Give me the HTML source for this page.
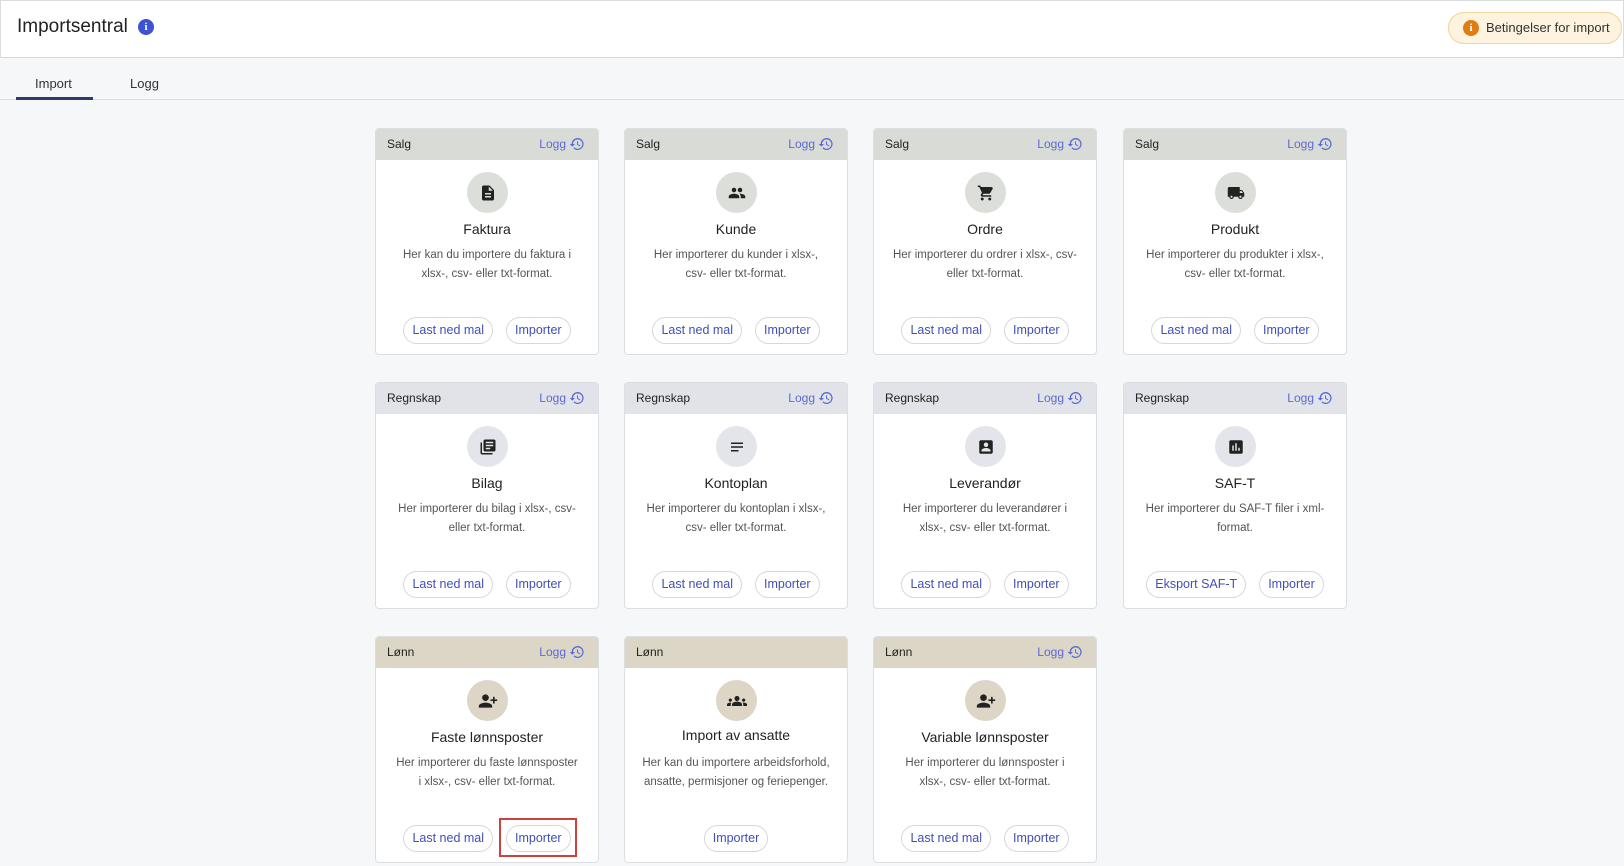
<!DOCTYPE html>
<html><head><meta charset="utf-8"><style>
*{box-sizing:border-box;margin:0;padding:0}
body{width:1624px;height:866px;background:#f5f7f9;font-family:"Liberation Sans",sans-serif;position:relative;overflow:hidden;color:#222}
.top{position:absolute;left:0;top:0;width:1624px;height:58px;background:#fff;border:1px solid #d9dcdf;border-bottom:1px solid #d6d9dc}
.title{position:absolute;left:16px;top:15px;font-size:19px;color:#222}
.info{position:absolute;left:137px;top:18px;width:16px;height:16px;border-radius:50%;background:#3d52d5;color:#fff;font-size:11px;font-weight:bold;text-align:center;line-height:16px;font-family:"Liberation Serif",serif}
.pill{position:absolute;left:1447px;top:11px;width:174px;height:32px;border-radius:16px;background:#fdf3df;border:1px solid #ecd49a;font-size:13px;color:#333;line-height:30px;padding-left:37px}
.pill i{position:absolute;left:14px;top:7px;width:16px;height:16px;border-radius:50%;background:#e07d12;color:#fff;font-style:normal;font-size:11px;font-weight:bold;text-align:center;line-height:16px;font-family:"Liberation Serif",serif}
.tabs{position:absolute;left:0;top:99px;width:1624px;border-top:1px solid #dadde0}
.tab{position:absolute;top:76px;font-size:13px;color:#333}
.ul{position:absolute;left:16px;top:97px;width:77px;height:3px;background:#2b3b6b}
.card{position:absolute;width:224px;height:227px;background:#fff;border:1px solid #dcdfe2;border-radius:4px;overflow:hidden}
.hd{height:31px;padding:0 11px;font-size:12px;line-height:31px;color:#222;position:relative}
.salg{background:#d9dcd6}.reg{background:#e2e3e8}.lonn{background:#dcd6c7}
.logg{position:absolute;right:13px;top:0;color:#5a6ad8;font-size:12px}
.logg svg{vertical-align:-4px;margin-left:3px}
.ic{position:absolute;left:91px;top:43px;width:41px;height:41px;border-radius:50%;display:flex;align-items:center;justify-content:center}
.cs{background:#dcdeda}.cr{background:#e4e5ea}.cl{background:#ddd6c7}
.nm{position:absolute;left:0;right:0;top:92px;text-align:center;font-size:14px;color:#222}
.ds{position:absolute;left:18px;right:18px;top:117px;text-align:center;font-size:11.5px;line-height:19px;color:#555}
.bt{position:absolute;top:188px;left:0;right:0;display:flex;justify-content:center;gap:13px}
.b{height:27px;border:1px solid #d4d7db;border-radius:14px;padding:0 8px;font-size:12.5px;line-height:25px;color:#3f4fb8;background:#fff}
.red{position:absolute;left:499px;top:818px;width:78px;height:39px;border:2px solid #d0403c}
</style></head><body>
<div class="top"><div class="title">Importsentral</div><div class="info">i</div>
<div class="pill"><i>i</i>Betingelser for import</div></div>
<div class="tab" style="left:35px">Import</div><div class="tab" style="left:130px">Logg</div>
<div class="tabs"></div><div class="ul"></div>

<div class="card" style="left:375px;top:128px"><div class="hd salg">Salg<span class="logg">Logg<svg width="16" height="16" viewBox="0 0 24 24"><path d="M13 3a9 9 0 0 0-9 9H1l4 4 4-4H6a7 7 0 1 1 2 5l-1.4 1.4A9 9 0 1 0 13 3zm-1 5v5l4.3 2.5.7-1.2-3.5-2.1V8z" fill="#5a6ad8"/></svg></span></div>
<div class="ic cs"><svg width="18" height="18" viewBox="0 0 24 24"><path d="M14 2H6c-1.1 0-2 .9-2 2v16c0 1.1.9 2 2 2h12c1.1 0 2-.9 2-2V8l-6-6zm2 16H8v-2h8v2zm0-4H8v-2h8v2zm-3-5V3.5L18.5 9H13z" fill="#222"/></svg></div>
<div class="nm">Faktura</div><div class="ds">Her kan du importere du faktura i xlsx-, csv- eller txt-format.</div>
<div class="bt"><span class="b">Last ned mal</span><span class="b">Importer</span></div></div>

<div class="card" style="left:624px;top:128px"><div class="hd salg">Salg<span class="logg">Logg<svg width="16" height="16" viewBox="0 0 24 24"><path d="M13 3a9 9 0 0 0-9 9H1l4 4 4-4H6a7 7 0 1 1 2 5l-1.4 1.4A9 9 0 1 0 13 3zm-1 5v5l4.3 2.5.7-1.2-3.5-2.1V8z" fill="#5a6ad8"/></svg></span></div>
<div class="ic cs"><svg width="18" height="18" viewBox="0 0 24 24"><path d="M16 11c1.7 0 3-1.3 3-3s-1.3-3-3-3-3 1.3-3 3 1.3 3 3 3zm-8 0c1.7 0 3-1.3 3-3S9.7 5 8 5 5 6.3 5 8s1.3 3 3 3zm0 2c-2.3 0-7 1.2-7 3.5V19h14v-2.5c0-2.3-4.7-3.5-7-3.5zm8 0h-1c1.2.8 2 2 2 3.5V19h6v-2.5c0-2.3-4.7-3.5-7-3.5z" fill="#222"/></svg></div>
<div class="nm">Kunde</div><div class="ds">Her importerer du kunder i xlsx-, csv- eller txt-format.</div>
<div class="bt"><span class="b">Last ned mal</span><span class="b">Importer</span></div></div>

<div class="card" style="left:873px;top:128px"><div class="hd salg">Salg<span class="logg">Logg<svg width="16" height="16" viewBox="0 0 24 24"><path d="M13 3a9 9 0 0 0-9 9H1l4 4 4-4H6a7 7 0 1 1 2 5l-1.4 1.4A9 9 0 1 0 13 3zm-1 5v5l4.3 2.5.7-1.2-3.5-2.1V8z" fill="#5a6ad8"/></svg></span></div>
<div class="ic cs"><svg width="18" height="18" viewBox="0 0 24 24"><path d="M7 18c-1.1 0-2 .9-2 2s.9 2 2 2 2-.9 2-2-.9-2-2-2zM1 2v2h2l3.6 7.6L5.2 14c-.1.3-.2.6-.2 1 0 1.1.9 2 2 2h12v-2H7.4l1.1-2h7.5c.8 0 1.4-.4 1.7-1l3.6-6.5L19.6 4H5.2l-.9-2H1zm16 16c-1.1 0-2 .9-2 2s.9 2 2 2 2-.9 2-2-.9-2-2-2z" fill="#222"/></svg></div>
<div class="nm">Ordre</div><div class="ds">Her importerer du ordrer i xlsx-, csv- eller txt-format.</div>
<div class="bt"><span class="b">Last ned mal</span><span class="b">Importer</span></div></div>

<div class="card" style="left:1123px;top:128px"><div class="hd salg">Salg<span class="logg">Logg<svg width="16" height="16" viewBox="0 0 24 24"><path d="M13 3a9 9 0 0 0-9 9H1l4 4 4-4H6a7 7 0 1 1 2 5l-1.4 1.4A9 9 0 1 0 13 3zm-1 5v5l4.3 2.5.7-1.2-3.5-2.1V8z" fill="#5a6ad8"/></svg></span></div>
<div class="ic cs"><svg width="18" height="18" viewBox="0 0 24 24"><path d="M20 8h-3V4H3c-1.1 0-2 .9-2 2v11h2c0 1.7 1.3 3 3 3s3-1.3 3-3h6c0 1.7 1.3 3 3 3s3-1.3 3-3h2v-5l-3-4zM6 18.5c-.8 0-1.5-.7-1.5-1.5s.7-1.5 1.5-1.5 1.5.7 1.5 1.5-.7 1.5-1.5 1.5zm12 0c-.8 0-1.5-.7-1.5-1.5s.7-1.5 1.5-1.5 1.5.7 1.5 1.5-.7 1.5-1.5 1.5zM17 12V9.5h2.5l2 2.5H17z" fill="#222"/></svg></div>
<div class="nm">Produkt</div><div class="ds">Her importerer du produkter i xlsx-, csv- eller txt-format.</div>
<div class="bt"><span class="b">Last ned mal</span><span class="b">Importer</span></div></div>

<div class="card" style="left:375px;top:382px"><div class="hd reg">Regnskap<span class="logg">Logg<svg width="16" height="16" viewBox="0 0 24 24"><path d="M13 3a9 9 0 0 0-9 9H1l4 4 4-4H6a7 7 0 1 1 2 5l-1.4 1.4A9 9 0 1 0 13 3zm-1 5v5l4.3 2.5.7-1.2-3.5-2.1V8z" fill="#5a6ad8"/></svg></span></div>
<div class="ic cr"><svg width="18" height="18" viewBox="0 0 24 24"><path d="M4 6H2v14c0 1.1.9 2 2 2h14v-2H4V6zm16-4H8c-1.1 0-2 .9-2 2v12c0 1.1.9 2 2 2h12c1.1 0 2-.9 2-2V4c0-1.1-.9-2-2-2zm-1 9H9V9h10v2zm-4 4H9v-2h6v2zm4-8H9V5h10v2z" fill="#222"/></svg></div>
<div class="nm">Bilag</div><div class="ds">Her importerer du bilag i xlsx-, csv- eller txt-format.</div>
<div class="bt"><span class="b">Last ned mal</span><span class="b">Importer</span></div></div>

<div class="card" style="left:624px;top:382px"><div class="hd reg">Regnskap<span class="logg">Logg<svg width="16" height="16" viewBox="0 0 24 24"><path d="M13 3a9 9 0 0 0-9 9H1l4 4 4-4H6a7 7 0 1 1 2 5l-1.4 1.4A9 9 0 1 0 13 3zm-1 5v5l4.3 2.5.7-1.2-3.5-2.1V8z" fill="#5a6ad8"/></svg></span></div>
<div class="ic cr"><svg width="18" height="18" viewBox="0 0 24 24"><path d="M4 6h16v2H4zm0 5h16v2H4zm0 5h10v2H4z" fill="#222"/></svg></div>
<div class="nm">Kontoplan</div><div class="ds">Her importerer du kontoplan i xlsx-, csv- eller txt-format.</div>
<div class="bt"><span class="b">Last ned mal</span><span class="b">Importer</span></div></div>

<div class="card" style="left:873px;top:382px"><div class="hd reg">Regnskap<span class="logg">Logg<svg width="16" height="16" viewBox="0 0 24 24"><path d="M13 3a9 9 0 0 0-9 9H1l4 4 4-4H6a7 7 0 1 1 2 5l-1.4 1.4A9 9 0 1 0 13 3zm-1 5v5l4.3 2.5.7-1.2-3.5-2.1V8z" fill="#5a6ad8"/></svg></span></div>
<div class="ic cr"><svg width="18" height="18" viewBox="0 0 24 24"><path d="M19 3H5c-1.1 0-2 .9-2 2v14c0 1.1.9 2 2 2h14c1.1 0 2-.9 2-2V5c0-1.1-.9-2-2-2zm-7 3c1.7 0 3 1.3 3 3s-1.3 3-3 3-3-1.3-3-3 1.3-3 3-3zm6 12H6v-1.5c0-2 4-3.1 6-3.1s6 1.1 6 3.1V18z" fill="#222"/></svg></div>
<div class="nm">Leverandør</div><div class="ds">Her importerer du leverandører i xlsx-, csv- eller txt-format.</div>
<div class="bt"><span class="b">Last ned mal</span><span class="b">Importer</span></div></div>

<div class="card" style="left:1123px;top:382px"><div class="hd reg">Regnskap<span class="logg">Logg<svg width="16" height="16" viewBox="0 0 24 24"><path d="M13 3a9 9 0 0 0-9 9H1l4 4 4-4H6a7 7 0 1 1 2 5l-1.4 1.4A9 9 0 1 0 13 3zm-1 5v5l4.3 2.5.7-1.2-3.5-2.1V8z" fill="#5a6ad8"/></svg></span></div>
<div class="ic cr"><svg width="18" height="18" viewBox="0 0 24 24"><path d="M19 3H5c-1.1 0-2 .9-2 2v14c0 1.1.9 2 2 2h14c1.1 0 2-.9 2-2V5c0-1.1-.9-2-2-2zM9 17H7v-7h2v7zm4 0h-2V7h2v10zm4 0h-2v-4h2v4z" fill="#222"/></svg></div>
<div class="nm">SAF-T</div><div class="ds">Her importerer du SAF-T filer i xml-format.</div>
<div class="bt"><span class="b">Eksport SAF-T</span><span class="b">Importer</span></div></div>

<div class="card" style="left:375px;top:636px"><div class="hd lonn">Lønn<span class="logg">Logg<svg width="16" height="16" viewBox="0 0 24 24"><path d="M13 3a9 9 0 0 0-9 9H1l4 4 4-4H6a7 7 0 1 1 2 5l-1.4 1.4A9 9 0 1 0 13 3zm-1 5v5l4.3 2.5.7-1.2-3.5-2.1V8z" fill="#5a6ad8"/></svg></span></div>
<div class="ic cl"><svg width="20" height="20" viewBox="0 0 24 24"><path d="M9 12c2.2 0 4-1.8 4-4S11.2 4 9 4 5 5.8 5 8s1.8 4 4 4zm0 2c-2.7 0-8 1.3-8 4v2h16v-2c0-2.7-5.3-4-8-4zm11-4V7h-2v3h-3v2h3v3h2v-3h3v-2h-3z" fill="#222"/></svg></div>
<div class="nm">Faste lønnsposter</div><div class="ds">Her importerer du faste lønnsposter i xlsx-, csv- eller txt-format.</div>
<div class="bt"><span class="b">Last ned mal</span><span class="b">Importer</span></div></div>

<div class="card" style="left:624px;top:636px"><div class="hd lonn">Lønn</div>
<div class="ic cl"><svg width="20" height="20" viewBox="0 0 24 24"><path d="M12 12.8c1.6 0 3 .4 4.2.9 1 .5 1.8 1.4 1.8 2.6V18H6v-1.7c0-1.2.7-2.1 1.8-2.6 1.1-.5 2.600-.9 4.2-.9zM4 13c1.1 0 2-.9 2-2s-.9-2-2-2-2 .9-2 2 .9 2 2 2zm1.1 1.1C4.8 14 4.4 14 4 14c-1 0-1.9.2-2.8.6C.5 14.9 0 15.6 0 16.4V18h4.5v-1.6c0-.8.2-1.6.6-2.3zM20 13c1.1 0 2-.9 2-2s-.9-2-2-2-2 .9-2 2 .9 2 2 2zm4 3.4c0-.8-.5-1.5-1.2-1.8-.9-.4-1.8-.6-2.8-.6-.4 0-.8 0-1.100.1.4.7.6 1.5.6 2.3V18H24v-1.6zM12 6c1.7 0 3 1.3 3 3s-1.3 3-3 3-3-1.3-3-3 1.3-3 3-3z" fill="#222"/></svg></div>
<div class="nm" style="top:90px">Import av ansatte</div><div class="ds" style="left:10px;right:10px">Her kan du importere arbeidsforhold, ansatte, permisjoner og feriepenger.</div>
<div class="bt"><span class="b">Importer</span></div></div>

<div class="card" style="left:873px;top:636px"><div class="hd lonn">Lønn<span class="logg">Logg<svg width="16" height="16" viewBox="0 0 24 24"><path d="M13 3a9 9 0 0 0-9 9H1l4 4 4-4H6a7 7 0 1 1 2 5l-1.4 1.4A9 9 0 1 0 13 3zm-1 5v5l4.3 2.5.7-1.2-3.5-2.1V8z" fill="#5a6ad8"/></svg></span></div>
<div class="ic cl"><svg width="20" height="20" viewBox="0 0 24 24"><path d="M9 12c2.2 0 4-1.8 4-4S11.2 4 9 4 5 5.8 5 8s1.8 4 4 4zm0 2c-2.7 0-8 1.3-8 4v2h16v-2c0-2.7-5.3-4-8-4zm11-4V7h-2v3h-3v2h3v3h2v-3h3v-2h-3z" fill="#222"/></svg></div>
<div class="nm">Variable lønnsposter</div><div class="ds">Her importerer du lønnsposter i xlsx-, csv- eller txt-format.</div>
<div class="bt"><span class="b">Last ned mal</span><span class="b">Importer</span></div></div>

<div class="red"></div>
</body></html>
